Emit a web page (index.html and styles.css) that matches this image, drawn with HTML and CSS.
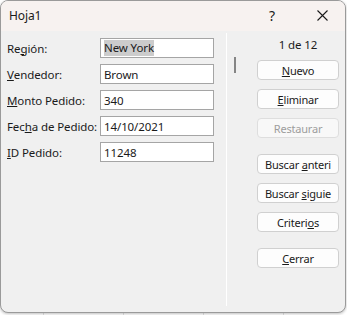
FILE: index.html
```html
<!DOCTYPE html>
<html>
<head>
  <title>Hoja1</title>
  <link rel="stylesheet" href="styles.css">
</head>
<body>
  <div class="window">
    <div class="titlebar">
      <span class="title">Hoja1</span>
      <span class="help">?</span>
      <span class="close">
        <svg width="11" height="11" viewBox="0 0 11 11"><path d="M0.5 0.5 L10.5 10.5 M10.5 0.5 L0.5 10.5" stroke="#1a1a1a" stroke-width="1.1" fill="none"/></svg>
      </span>
    </div>
    <div class="content">
      <div class="form">
        <label>Re<u>g</u>ión:</label>
        <div class="field"><span class="selected">New York</span></div>
        <label><u>V</u>endedor:</label>
        <div class="field">Brown</div>
        <label><u>M</u>onto Pedido:</label>
        <div class="field">340</div>
        <label>Fec<u>h</u>a de Pedido:</label>
        <div class="field">14/10/2021</div>
        <label><u>I</u>D Pedido:</label>
        <div class="field">11248</div>
      </div>
      <div class="separator"></div>
      <div class="scroll"><div class="thumb"></div></div>
      <div class="buttons">
        <div class="counter">1 de 12</div>
        <button><u>N</u>uevo</button>
        <button><u>E</u>liminar</button>
        <button class="disabled">Restaurar</button>
        <button class="group">Buscar <u>a</u>nteri</button>
        <button>Buscar <u>s</u>iguie</button>
        <button>Criteri<u>o</u>s</button>
        <button class="group"><u>C</u>errar</button>
      </div>
    </div>
  </div>
</body>
</html>
```

FILE: styles.css
```css
body {
  margin: 0;
  padding: 0;
  width: 347px;
  height: 315px;
  overflow: hidden;
  background-color: #ffffff;
  background-image:
    linear-gradient(to right, #e2e2e2 1px, transparent 1px);
  background-size: 80px 315px;
  background-position: 43px 0;
  font-family: "Noto Sans", "Open Sans", sans-serif;
  font-size: 11.5px;
  letter-spacing: -0.1px;
  color: #1a1a1a;
}
.window {
  width: 344px;
  height: 311px;
  border: 1px solid #9a9a9a;
  border-radius: 8px;
  background-color: #f0f0f0;
  box-shadow: 0 1px 3px rgba(0, 0, 0, 0.25);
  overflow: hidden;
  display: flex;
  flex-direction: column;
}
.titlebar {
  height: 30px;
  background-color: #f7f2f0;
  display: flex;
  align-items: center;
}
.title {
  margin-left: 8px;
  flex: 1;
  font-size: 12px;
  margin-top: -1px;
}
.help {
  font-size: 14px;
  width: 12px;
  margin-right: 36px;
  margin-top: -2px;
}
.close {
  display: flex;
  margin-right: 17px;
  margin-top: -1px;
}
.content {
  flex: 1;
  display: flex;
}
.form {
  width: 219px;
  padding: 7px 0 0 6px;
  display: grid;
  grid-template-columns: 93px 114px;
  grid-auto-rows: 20px;
  row-gap: 6px;
  align-content: start;
}
.form label {
  display: flex;
  align-items: center;
  white-space: nowrap;
}
.field {
  box-sizing: border-box;
  border: 1px solid #a5a5a5;
  background-color: #ffffff;
  padding: 0 3px;
  display: flex;
  align-items: center;
}
.selected {
  background-color: #cccccc;
  line-height: 16px;
}
.separator {
  width: 1px;
  background-color: #ffffff;
  margin: 2px 0 6px 0;
}
.scroll {
  padding-left: 7px;
  width: 2px;
}
.thumb {
  width: 2px;
  height: 16px;
  margin-top: 26px;
  background-color: #858585;
}
.buttons {
  margin-left: 21px;
  width: 82px;
  padding-top: 6px;
  display: flex;
  flex-direction: column;
  gap: 9px;
}
.counter {
  text-align: center;
  line-height: 16px;
  margin-bottom: -2px;
}
button {
  height: 20px;
  padding: 0;
  border: 1px solid #d0d0d0;
  border-radius: 4px;
  background-color: #fdfdfd;
  font-family: inherit;
  font-size: 11px;
  letter-spacing: -0.2px;
  color: #1a1a1a;
  white-space: nowrap;
  overflow: hidden;
}
button.disabled {
  color: #9d9d9d;
  border-color: #dedede;
  background-color: #f8f8f8;
}
button.group {
  margin-top: 7px;
}
```
